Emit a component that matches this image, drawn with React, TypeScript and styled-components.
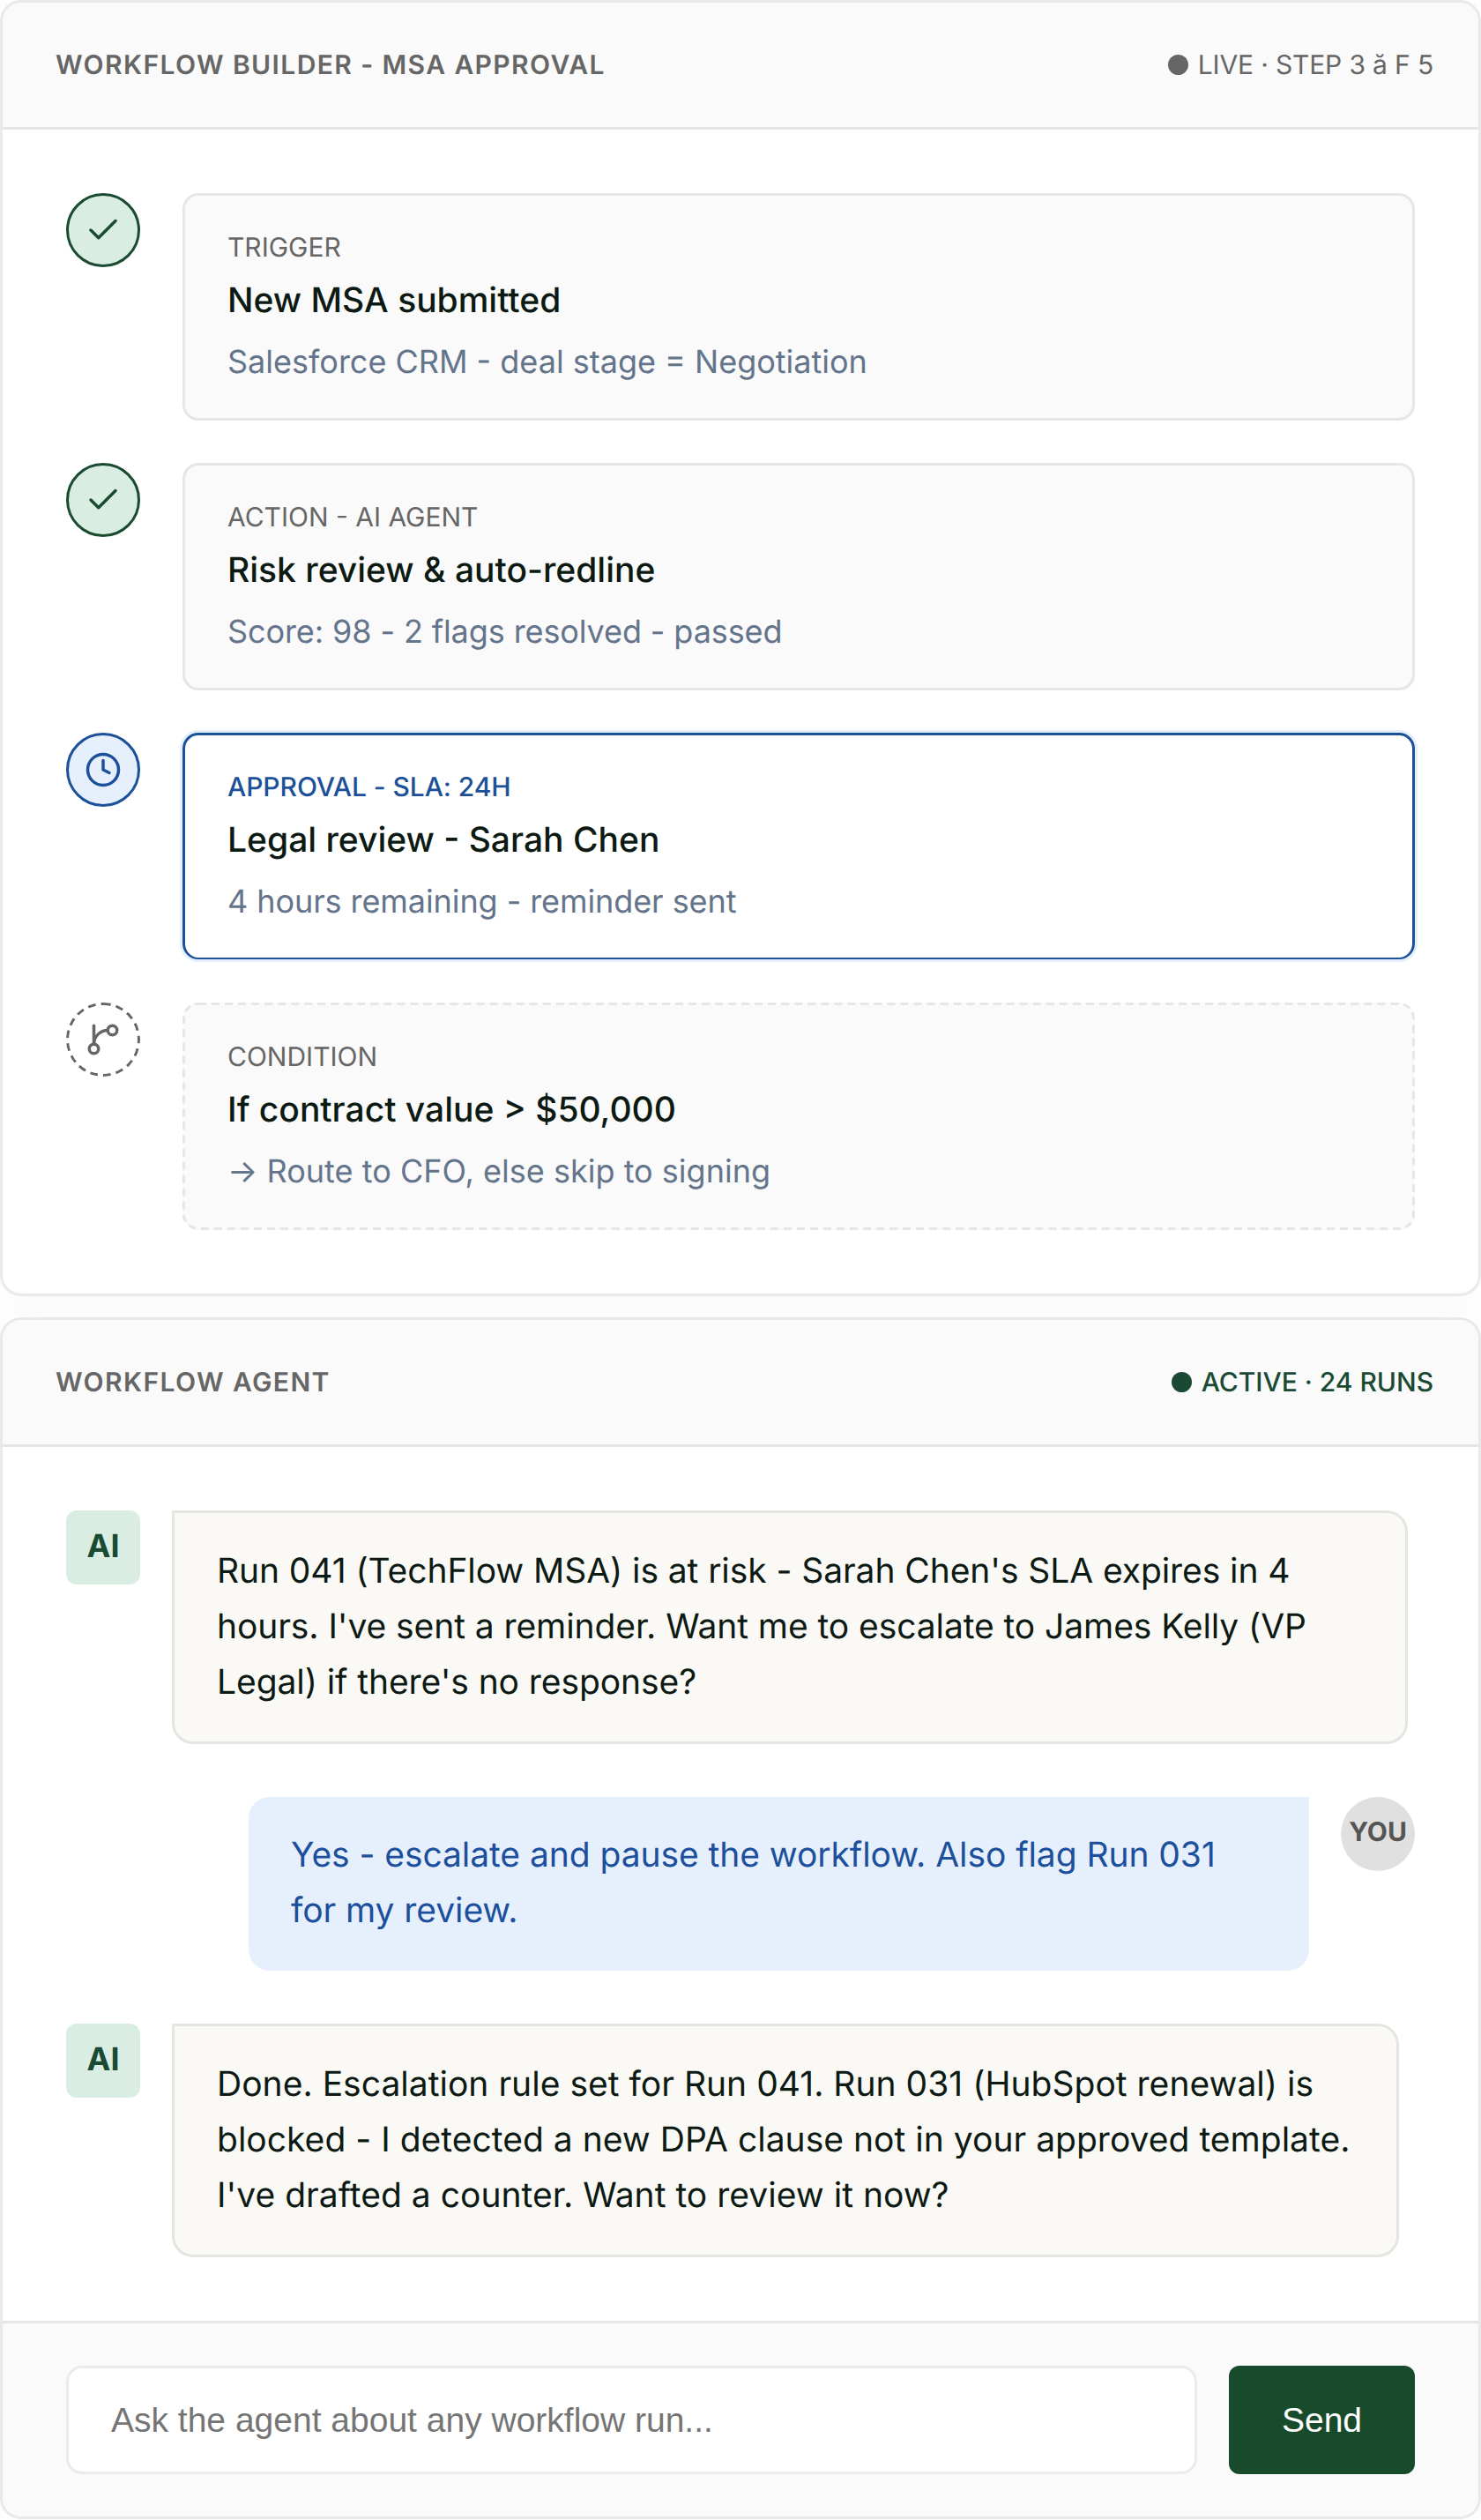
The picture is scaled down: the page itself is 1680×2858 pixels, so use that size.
import React from 'react';
import styled, { createGlobalStyle, css } from 'styled-components';

const Global = createGlobalStyle`
  *, *::before, *::after { box-sizing: border-box; }
  body {
    margin: 0;
    background: #fff;
    font-family: Inter, 'Liberation Sans', sans-serif;
    color: #0d1a14;
    text-rendering: geometricPrecision;
  }
`;

const Page = styled.main`
  display: flex;
  flex-direction: column;
  gap: 24px;
  width: 1680px;
`;

const Panel = styled.section`
  border: 3px solid #e9e9e9;
  border-radius: 24px;
  background: #fff;
  overflow: hidden;
  box-shadow: 0 3px 36px rgba(0, 0, 0, 0.03);
`;

const PanelHeader = styled.header`
  display: flex;
  align-items: center;
  justify-content: space-between;
  height: 144px;
  padding: 0 51px 0 60px;
  border-bottom: 3px solid #e6e6e6;
  background: #fafafa;
`;

const PanelTitle = styled.h2`
  margin: 0;
  padding-top: 1px;
  font-size: 30px;
  font-weight: 600;
  line-height: 45px;
  letter-spacing: 1.4px;
  color: #666;
`;

const Status = styled.span<{ $active?: boolean }>`
  display: flex;
  align-items: center;
  gap: 11px;
  padding-top: 1px;
  font-size: 30px;
  line-height: 45px;
  letter-spacing: ${(p) => (p.$active ? '-0.03px' : '-0.15px')};
  font-weight: ${(p) => (p.$active ? 500 : 400)};
  color: ${(p) => (p.$active ? '#1a4a33' : '#666')};
`;

const Dot = styled.i`
  width: 23px;
  height: 23px;
  margin-top: -1px;
  border-radius: 50%;
  background: currentColor;
`;

const Steps = styled.div`
  display: flex;
  flex-direction: column;
  gap: 48px;
  padding: 72px;
`;

const Step = styled.div`
  display: flex;
  align-items: flex-start;
  gap: 48px;
  height: 258px;
`;

type Kind = 'done' | 'current' | 'pending';

/* A 1px dashed outline enlarged three times, which keeps the long dashes of a hairline border. */
const dashedOutline = (color: string, radius: string) => css`
  position: relative;
  border: 3px solid transparent;
  &::before {
    content: '';
    position: absolute;
    top: -3px;
    left: -3px;
    width: calc((100% + 6px) / 3);
    height: calc((100% + 6px) / 3);
    border: 1px dashed ${color};
    border-radius: ${radius};
    transform: scale(3);
    transform-origin: 0 0;
  }
`;

const marker = {
  done: css`background: #d9ede2; color: #1a4a30; border: 3px solid #1a4a30;`,
  current: css`background: #e6effc; color: #1c5199; border: 3px solid #1c5199;`,
  pending: css`background: #fff; color: #666; ${dashedOutline('#666', '50%')}`,
};

const Marker = styled.div<{ $kind: Kind }>`
  display: flex;
  align-items: center;
  justify-content: center;
  flex: none;
  width: 84px;
  height: 84px;
  border-radius: 50%;
  ${(p) => marker[p.$kind]}
`;

const Glyph = styled.svg`
  width: 42px;
  height: 42px;
  fill: none;
  stroke: currentColor;
  stroke-width: 2;
  stroke-linecap: round;
  stroke-linejoin: round;
`;

const card = {
  done: css`background: #fafafa; border: 3px solid #e6e6e6;`,
  current: css`
    height: 257px;
    background: #fff;
    border: 3px solid #1c5199;
    border-bottom-width: 2px;
    box-shadow: 0 0 0 3px #e3effb;
  `,
  pending: css`background: #fafafa; ${dashedOutline('#e6e6e6', '6px')}`,
};

const StepCard = styled.div<{ $kind: Kind }>`
  flex: 1;
  height: 258px;
  padding: 37px 48px 0;
  border-radius: 18px;
  ${(p) => card[p.$kind]}
`;

const StepLabel = styled.div<{ $kind: Kind }>`
  font-size: 30px;
  line-height: 45px;
  letter-spacing: ${(p) => (p.$kind === 'current' ? '-0.08px' : 'normal')};
  font-weight: ${(p) => (p.$kind === 'current' ? 500 : 400)};
  color: ${(p) => (p.$kind === 'current' ? '#1c5199' : '#666')};
`;

const StepTitle = styled.div`
  margin-top: 6px;
  font-size: 39px;
  line-height: 62px;
  font-weight: 500;
`;

const StepNote = styled.div<{ $tracking: number }>`
  margin-top: 10px;
  font-size: 36px;
  line-height: 57px;
  letter-spacing: ${(p) => p.$tracking}px;
  color: #64748b;
`;

const Chat = styled.div`
  display: flex;
  flex-direction: column;
  gap: 60px;
  padding: 72px;
`;

const Message = styled.div<{ $mine?: boolean }>`
  display: flex;
  align-items: flex-start;
  flex-direction: ${(p) => (p.$mine ? 'row-reverse' : 'row')};
  gap: 36px;
`;

const Avatar = styled.div<{ $mine?: boolean }>`
  display: flex;
  align-items: center;
  justify-content: center;
  flex: none;
  width: 84px;
  height: 84px;
  padding-bottom: 4px;
  border-radius: ${(p) => (p.$mine ? '50%' : '12px')};
  background: ${(p) => (p.$mine ? '#e0e0e0' : '#d9ede2')};
  color: ${(p) => (p.$mine ? '#555' : '#1a4a33')};
  font-size: ${(p) => (p.$mine ? 30 : 36)}px;
  font-weight: 700;
`;

const Bubble = styled.div<{ $mine?: boolean; $width: number; $tracking: number }>`
  width: ${(p) => p.$width}px;
  padding: 34px 48px 36.4px;
  font-size: 39px;
  line-height: 63px;
  letter-spacing: ${(p) => p.$tracking}px;
  white-space: pre-line;
  ${(p) =>
    p.$mine
      ? css`background: #e6effc; color: #1c4f9c; border-radius: 24px 0 24px 24px;`
      : css`background: #faf9f5; border: 3px solid #e5e5e2; border-radius: 0 24px 24px 24px;`}
`;

const Composer = styled.form`
  display: flex;
  gap: 36px;
  padding: 48px 72px;
  border-top: 3px solid #e6e6e6;
  background: #fafafa;
`;

const Prompt = styled.input`
  flex: 1;
  min-width: 0;
  height: 123px;
  padding: 0 48px;
  border: 3px solid #ebebeb;
  border-radius: 18px;
  background: #fff;
  font: 39px 'Liberation Sans', Arial, sans-serif;
  text-rendering: auto;
  &::placeholder { color: #757575; opacity: 1; }
`;

const Send = styled.button`
  width: 211px;
  height: 123px;
  padding: 0;
  border: 0;
  border-radius: 12px;
  background: #184a2c;
  color: #fff;
  font: 39px 'Liberation Sans', Arial, sans-serif;
  text-rendering: auto;
`;

const CheckIcon = () => (
  <Glyph viewBox="0 0 24 24"><path d="M20 6 9 17l-5-5" /></Glyph>
);
const ClockIcon = () => (
  <Glyph viewBox="0 0 24 24"><circle cx="12" cy="12" r="10" /><path d="M12 6v6l4 2" /></Glyph>
);
const BranchIcon = () => (
  <Glyph viewBox="0 0 24 24">
    <path d="M6 3v12" /><circle cx="18" cy="6" r="3" /><circle cx="6" cy="18" r="3" /><path d="M15 6a9 9 0 0 0-9 9" />
  </Glyph>
);

type StepData = { kind: Kind; icon: React.ReactNode; label: string; title: string; note: string; tracking: number };

const steps: StepData[] = [
  { kind: 'done', icon: <CheckIcon />, label: 'TRIGGER', title: 'New MSA submitted', note: 'Salesforce CRM - deal stage = Negotiation', tracking: 0 },
  { kind: 'done', icon: <CheckIcon />, label: 'ACTION - AI AGENT', title: 'Risk review & auto-redline', note: 'Score: 98 - 2 flags resolved - passed', tracking: -0.1 },
  { kind: 'current', icon: <ClockIcon />, label: 'APPROVAL - SLA: 24H', title: 'Legal review - Sarah Chen', note: '4 hours remaining - reminder sent', tracking: -0.08 },
  { kind: 'pending', icon: <BranchIcon />, label: 'CONDITION', title: 'If contract value > $50,000', note: '→ Route to CFO, else skip to signing', tracking: 0.02 },
];

const messages = [
  { mine: false, width: 1402, tracking: -0.08, text: "Run 041 (TechFlow MSA) is at risk - Sarah Chen's SLA expires in 4\nhours. I've sent a reminder. Want me to escalate to James Kelly (VP\nLegal) if there's no response?" },
  { mine: true, width: 1203, tracking: -0.07, text: 'Yes - escalate and pause the workflow. Also flag Run 031\nfor my review.' },
  { mine: false, width: 1392, tracking: 0.02, text: "Done. Escalation rule set for Run 041. Run 031 (HubSpot renewal) is\nblocked - I detected a new DPA clause not in your approved template.\nI've drafted a counter. Want to review it now?" },
];

export default function App() {
  return (
    <>
      <Global />
      <Page>
        <Panel>
          <PanelHeader>
            <PanelTitle>WORKFLOW BUILDER - MSA APPROVAL</PanelTitle>
            <Status><Dot />LIVE · STEP 3 ă F 5</Status>
          </PanelHeader>
          <Steps>
            {steps.map((s) => (
              <Step key={s.label}>
                <Marker $kind={s.kind}>{s.icon}</Marker>
                <StepCard $kind={s.kind}>
                  <StepLabel $kind={s.kind}>{s.label}</StepLabel>
                  <StepTitle>{s.title}</StepTitle>
                  <StepNote $tracking={s.tracking}>{s.note}</StepNote>
                </StepCard>
              </Step>
            ))}
          </Steps>
        </Panel>
        <Panel>
          <PanelHeader>
            <PanelTitle>WORKFLOW AGENT</PanelTitle>
            <Status $active><Dot />ACTIVE · 24 RUNS</Status>
          </PanelHeader>
          <Chat>
            {messages.map((m) => (
              <Message key={m.text} $mine={m.mine}>
                <Avatar $mine={m.mine}>{m.mine ? 'YOU' : 'AI'}</Avatar>
                <Bubble $mine={m.mine} $width={m.width} $tracking={m.tracking}>{m.text}</Bubble>
              </Message>
            ))}
          </Chat>
          <Composer onSubmit={(e) => e.preventDefault()}>
            <Prompt placeholder="Ask the agent about any workflow run..." />
            <Send type="submit">Send</Send>
          </Composer>
        </Panel>
      </Page>
    </>
  );
}
